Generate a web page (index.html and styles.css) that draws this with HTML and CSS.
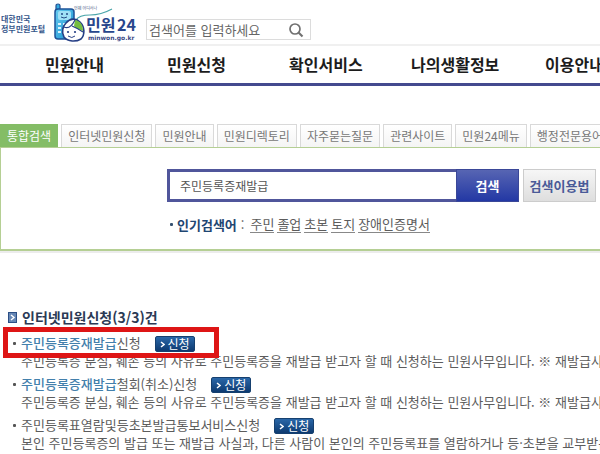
FILE: index.html
```html
<!DOCTYPE html>
<html lang="ko">
<head>
  <meta charset="UTF-8">
  <meta name="viewport" content="width=device-width, initial-scale=1.0">
  <title>민원24 통합검색</title>
  <link rel="stylesheet" href="styles.css">
</head>
<body>

<header class="header">
  <a class="portal" href="#">대한민국<br>정부민원포털</a>
  <a class="logo" href="#" aria-label="민원24">
    <svg width="88" height="44" viewBox="0 0 88 44">
      <defs>
        <linearGradient id="phone" x1="0" y1="0" x2="1" y2="1">
          <stop offset="0" stop-color="#69cdf0"/>
          <stop offset="1" stop-color="#168fd0"/>
        </linearGradient>
      </defs>
      <!-- 휴대폰 -->
      <path d="M4 12V6q0-2 2-2t2 2v4" fill="#35ace0" stroke="#214f93" stroke-width="1.2"/>
      <path d="M6 9h13q3 0 3 3v10L14 39H6q-3 0-3-3V12q0-3 3-3z" fill="url(#phone)" stroke="#1c5298" stroke-width="1.5"/>
      <rect x="6" y="11" width="13" height="9" rx="2" fill="#9fe0f6"/>
      <circle cx="10" cy="14" r="1" fill="#234b86"/>
      <circle cx="15" cy="14" r="1" fill="#234b86"/>
      <path d="M9 17q3 2 6 0" fill="none" stroke="#234b86"/>
      <path d="M6 24h3M6 28h3M6 32h3M11 24h3" stroke="#d6f3ff" stroke-width="2"/>
      <!-- 마우스 -->
      <path d="M24 20q3-5 14-5T60 9" fill="none" stroke="#4aa5a9" stroke-width="1.2"/>
      <path d="M14 23c4-5 10-5 14-1 5 5 5 13 1 17-5 3-13 3-17-2-3-5-1-11 2-14z" fill="#fff" stroke="#263f85" stroke-width="1.6"/>
      <path d="M23 20c6 1 8 6 8 11-4-2-7-2-9-5z" fill="#75bd3f"/>
      <path d="M12 27q6 3 11-7M20 26q5 2 11 6" fill="none" stroke="#263f85" stroke-width="1.2"/>
      <circle cx="16" cy="32" r="1.1" fill="#263f85"/>
      <circle cx="23" cy="32" r="1.1" fill="#263f85"/>
      <path d="M16 36q4 3 7 0" fill="none" stroke="#263f85"/>
      <text class="logo-tag" x="22" y="10">언제 어디서나</text>
      <text class="logo-name" x="34" y="31">민원</text>
      <text class="logo-name" x="65" y="31">24</text>
      <text class="logo-url" x="36" y="40">minwon.go.kr</text>
    </svg>
  </a>
  <form class="quick">
    <input class="quick-input" type="text" aria-label="검색어" placeholder="검색어를 입력하세요">
    <button class="quick-btn" type="button" aria-label="검색">
      <svg width="16" height="16" viewBox="0 0 16 16" fill="none" stroke="#707070">
        <circle cx="7" cy="7" r="5" stroke-width="1.7"/>
        <path d="M10.5 10.5l4 4" stroke-width="2.2"/>
      </svg>
    </button>
  </form>
</header>

<nav class="nav">
  <a href="#">민원안내</a>
  <a href="#">민원신청</a>
  <a href="#">확인서비스</a>
  <a href="#">나의생활정보</a>
  <a href="#">이용안내</a>
</nav>

<main>
  <div class="tabs">
    <a class="tab active" href="#">통합검색</a>
    <a class="tab" href="#">인터넷민원신청</a>
    <a class="tab" href="#">민원안내</a>
    <a class="tab" href="#">민원디렉토리</a>
    <a class="tab" href="#">자주묻는질문</a>
    <a class="tab" href="#">관련사이트</a>
    <a class="tab" href="#">민원24메뉴</a>
    <a class="tab" href="#">행정전문용어</a>
  </div>

  <section class="search-box">
    <form class="search">
      <input class="search-input" type="text" aria-label="통합검색어" value="주민등록증재발급">
      <button class="search-btn" type="button">검색</button>
      <button class="guide-btn" type="button">검색이용법</button>
    </form>
    <div class="popular">
      <span class="dot"></span>
      <strong>인기검색어</strong>
      <span>:</span>
      <div class="words">
        <a href="#">주민</a>
        <a href="#">졸업</a>
        <a href="#">초본</a>
        <a href="#">토지</a>
        <a href="#">장애인증명서</a>
      </div>
    </div>
  </section>

  <section class="results">
    <h2 class="results-title">
      <svg width="9" height="11" viewBox="0 0 9 11">
        <rect x="0.5" y="0.5" width="8" height="10" fill="#6687b5" stroke="#2c4f86"/>
        <path d="M3 3l3 2.5L3 8" fill="none" stroke="#fff" stroke-width="1.4"/>
      </svg>
      인터넷민원신청(3/3)건
    </h2>
    <ul class="list">
      <li class="item marked">
        <div class="item-head">
          <a class="item-title" href="#"><b>주민등록증재발급</b>신청</a>
          <button class="apply" type="button"><svg width="5" height="7" viewBox="0 0 5 7"><path d="M1 1l3 2.5L1 6" fill="none" stroke="#fff" stroke-width="1.5"/></svg>신청</button>
        </div>
        <p class="desc">주민등록증 분실, 훼손 등의 사유로 주민등록증을 재발급 받고자 할 때 신청하는 민원사무입니다. ※ 재발급사유</p>
      </li>
      <li class="item">
        <div class="item-head">
          <a class="item-title" href="#"><b>주민등록증재발급</b>철회(취소)신청</a>
          <button class="apply" type="button"><svg width="5" height="7" viewBox="0 0 5 7"><path d="M1 1l3 2.5L1 6" fill="none" stroke="#fff" stroke-width="1.5"/></svg>신청</button>
        </div>
        <p class="desc">주민등록증 분실, 훼손 등의 사유로 주민등록증을 재발급 받고자 할 때 신청하는 민원사무입니다. ※ 재발급사유</p>
      </li>
      <li class="item">
        <div class="item-head">
          <a class="item-title" href="#">주민등록표열람및등초본발급통보서비스신청</a>
          <button class="apply" type="button"><svg width="5" height="7" viewBox="0 0 5 7"><path d="M1 1l3 2.5L1 6" fill="none" stroke="#fff" stroke-width="1.5"/></svg>신청</button>
        </div>
        <p class="desc">본인 주민등록증의 발급 또는 재발급 사실과, 다른 사람이 본인의 주민등록표를 열람하거나 등·초본을 교부받은</p>
      </li>
    </ul>
  </section>
</main>

</body>
</html>
```
FILE: styles.css
```css
*, *::before, *::after {
  box-sizing: border-box;
}
body {
  margin: 0;
  font-family: "Noto Sans CJK KR", sans-serif;
  font-size: 13px;
  color: #5c5c5c;
  background: #fff;
  overflow: hidden;
}
a {
  color: inherit;
  text-decoration: none;
}
input, button {
  font-family: inherit;
  margin: 0;
}
button {
  cursor: pointer;
}

/* 상단 */
.header {
  display: flex;
  height: 46px;
  border-bottom: 2px solid #f0f0f0;
}
.portal {
  width: 50px;
  padding: 14px 0 0 1px;
  font-size: 8px;
  line-height: 10px;
  font-weight: bold;
  color: #35568a;
  white-space: nowrap;
}
.logo {
  width: 96px;
}
.logo svg {
  display: block;
  margin-left: 2px;
}
.logo-tag {
  font-size: 4px;
  fill: #4a5a86;
}
.logo-name {
  font-size: 16px;
  font-weight: bold;
  fill: #28468c;
}
.logo-url {
  font-family: "DejaVu Sans", sans-serif;
  font-size: 6px;
  font-weight: bold;
  fill: #3c4a86;
}
.quick {
  display: flex;
  align-items: center;
  width: 165px;
  height: 21px;
  margin-top: 19px;
  border: 1px solid #dcdcdc;
}
.quick-input {
  flex: 1;
  min-width: 0;
  padding: 0 2px;
  border: 0;
  background: none;
  font-size: 13px;
  line-height: 17px;
}
.quick-input::placeholder {
  color: #666;
}
.quick-btn {
  display: flex;
  padding: 0;
  margin-right: 6px;
  border: 0;
  background: none;
}

/* 메뉴 */
.nav {
  display: grid;
  grid-template-columns: repeat(3, 122px) 134px auto;
  height: 40px;
  padding: 0 0 0 45px;
  border-bottom: 3px solid #444a8f;
  font-size: 16px;
  line-height: 37px;
  font-weight: bold;
  color: #1c1c1c;
  white-space: nowrap;
}

/* 탭 */
.tabs {
  display: flex;
  gap: 3px;
  margin-top: 38px;
}
.tab {
  flex: none;
  height: 23px;
  padding: 0 6px;
  border: 1px solid #d9d9d9;
  border-bottom: 0;
  background: linear-gradient(#fff, #f4f4f4);
  font-size: 12px;
  line-height: 22px;
  color: #777;
}
.tab.active {
  border-color: #84bd66;
  background: #84bd66;
  color: #fff;
}

/* 검색 */
.search-box {
  padding: 21px 4px 0 0;
  height: 104px;
  border: 1px solid #b5cf94;
  border-width: 1px 0 2px 1px;
  box-shadow: 0 2px 0 #ececec;
}
.search {
  display: flex;
  height: 33px;
  padding-left: 166px;
}
.search-input {
  flex: 1;
  min-width: 0;
  padding: 0 10px;
  border: 3px solid #50569b;
  border-right: 0;
  font-size: 12px;
  color: #555;
}
.search-btn {
  width: 63px;
  padding: 0;
  border: 1px solid #3a4798;
  background: linear-gradient(#5765b3, #2338a4);
  font-size: 13px;
  font-weight: bold;
  color: #fff;
}
.guide-btn {
  width: 73px;
  margin-left: 4px;
  padding: 0;
  border: 1px solid #ccc;
  background: linear-gradient(#f6f6f6, #dedede);
  font-size: 13px;
  font-weight: bold;
  color: #4a5a98;
}
.popular {
  display: flex;
  align-items: center;
  gap: 4px;
  margin-top: 14px;
  padding-left: 169px;
  line-height: 17px;
}
.popular strong {
  color: #1f4672;
}
.dot {
  width: 3px;
  height: 3px;
  border-radius: 1px;
  background: #35506f;
}
.words {
  display: flex;
  gap: 3px;
  margin-left: 2px;
}
.words a {
  height: 17px;
  border-bottom: 1px solid #888;
  line-height: 16px;
}

/* 결과 */
.results {
  padding: 56px 0 0 8px;
}
.results-title {
  display: flex;
  align-items: center;
  gap: 5px;
  margin: 0;
  font-size: 14px;
  line-height: 20px;
  color: #2b3a55;
}
.list {
  margin: 0;
  padding: 7px 0 0 13px;
  list-style: none;
}
.item {
  position: relative;
  padding-bottom: 6px;
  white-space: nowrap;
}
.item::before {
  content: "";
  position: absolute;
  left: -8px;
  top: 8px;
  width: 3px;
  height: 3px;
  border-radius: 1px;
  background: #555;
}
.item-head {
  display: flex;
  height: 18px;
  gap: 14px;
}
.item-title {
  line-height: 18px;
}
.item-title b {
  font-weight: 500;
  color: #4380ac;
}
.apply {
  display: flex;
  align-items: center;
  justify-content: center;
  gap: 3px;
  width: 40px;
  height: 16px;
  margin-top: 2px;
  padding: 0;
  border: 1px solid #16406f;
  border-radius: 2px;
  background: linear-gradient(#2a67a8, #0d3a70);
  font-size: 12px;
  line-height: 14px;
  color: #fff;
}
.desc {
  margin: 0;
  line-height: 17px;
}
/* 강조 테두리 */
.marked::after {
  content: "";
  position: absolute;
  left: -18px;
  top: -7px;
  width: 216px;
  height: 31px;
  border: 5px solid #de1515;
  pointer-events: none;
}
```
